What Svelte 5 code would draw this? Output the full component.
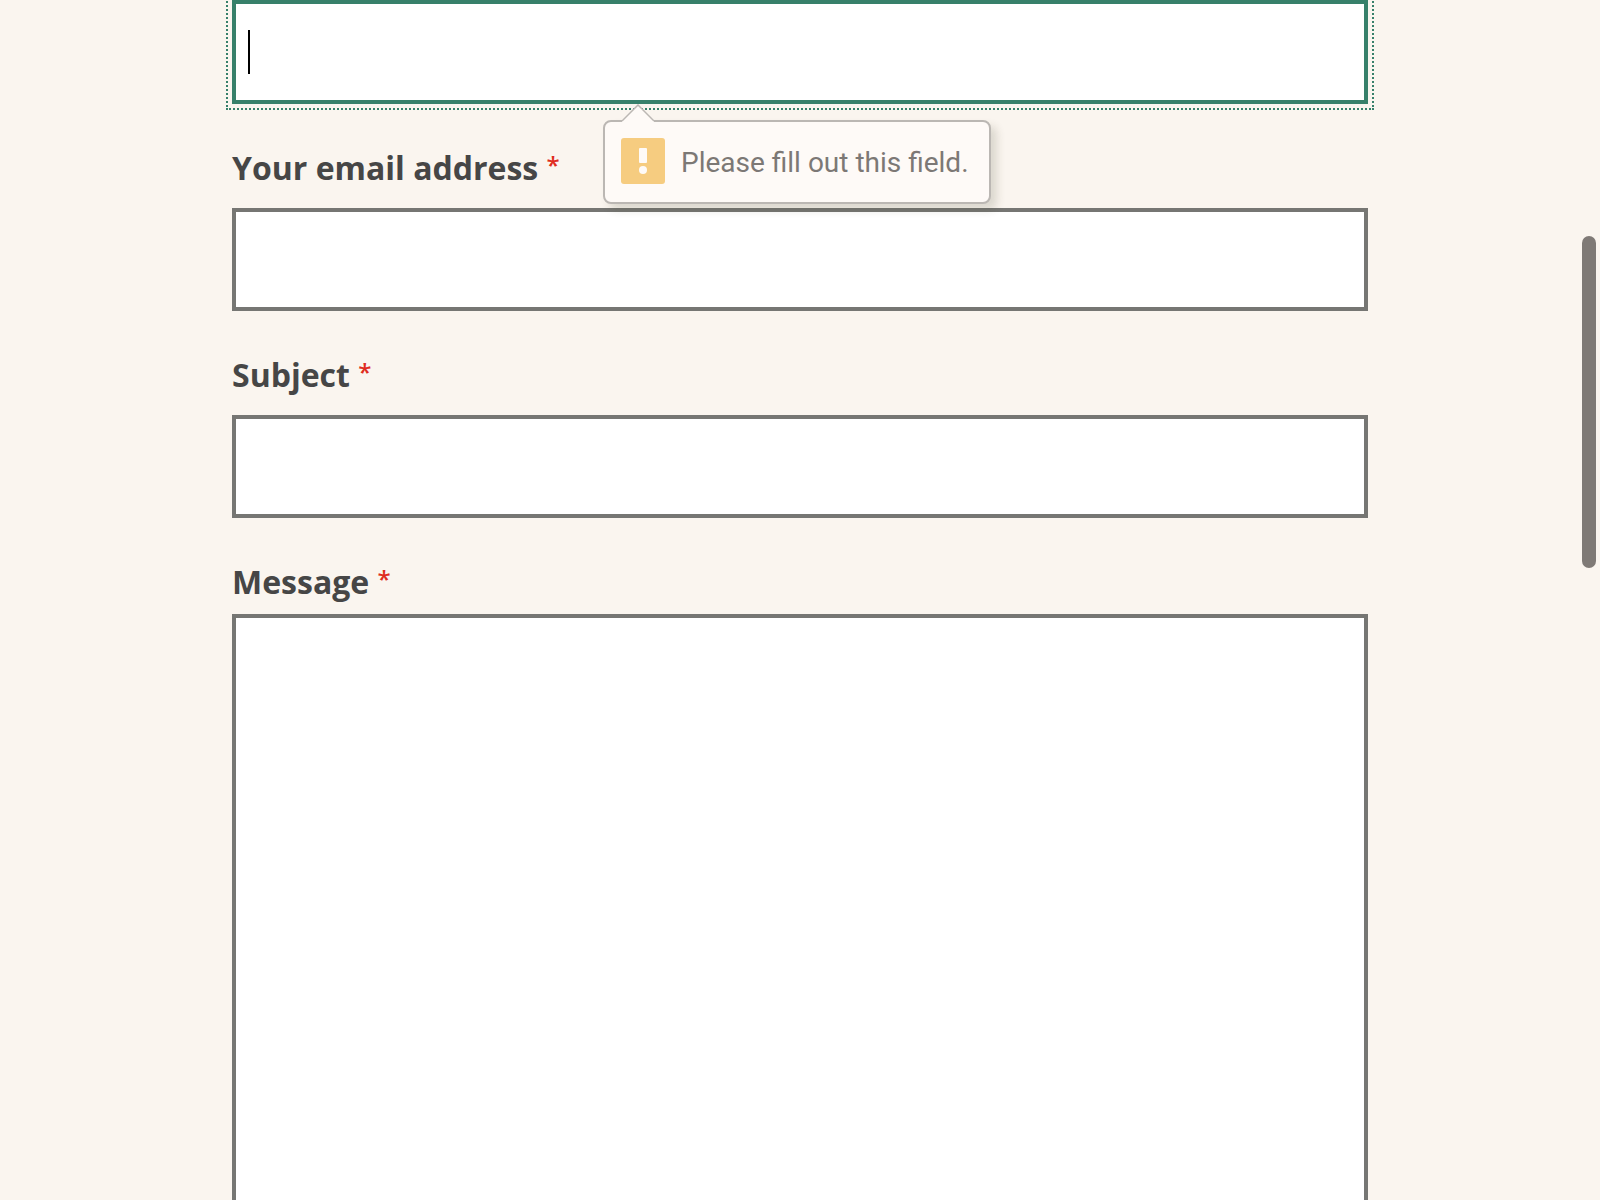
<script>
  let name = $state('');
  let email = $state('');
  let subject = $state('');
  let message = $state('');
</script>

<div class="page">
  <form class="form" novalidate>
    <div class="field">
      <input
        class="box current"
        type="text"
        aria-label="Your name"
        aria-describedby="name-hint"
        required
        bind:value={name}
      />
      <span class="caret" aria-hidden="true"></span>
      <div class="tip" id="name-hint" role="alert">
        <svg class="arrow" viewBox="0 0 32 18" aria-hidden="true">
          <path class="arrow-fill" d="M0 18V16L16 1L32 16V18Z" />
          <path class="arrow-line" d="M0 17L16 1L32 17" />
        </svg>
        <svg class="warning" viewBox="0 0 44 46" aria-hidden="true">
          <rect width="44" height="46" rx="3" fill="#f6cc80" />
          <rect x="18" y="10" width="8" height="15" rx="1" fill="#fefaf7" />
          <circle cx="22" cy="32" r="4" fill="#fefaf7" />
        </svg>
        <span>Please fill out this field.</span>
      </div>
    </div>

    <div class="field">
      <label for="email">Your email address <span class="star">*</span></label>
      <input class="box" id="email" type="email" required bind:value={email} />
    </div>

    <div class="field">
      <label for="subject">Subject <span class="star">*</span></label>
      <input class="box" id="subject" type="text" required bind:value={subject} />
    </div>

    <div class="field message">
      <label for="message">Message <span class="star">*</span></label>
      <textarea class="box" id="message" rows="20" required bind:value={message}></textarea>
    </div>
  </form>
  <div class="scroll-thumb" aria-hidden="true"></div>
</div>

<style>
  :global(body) {
    margin: 0;
    background: #faf5ef;
  }

  .page {
    position: relative;
    height: 100vh;
    overflow: hidden;
    background: #faf5ef;
    color: #464646;
    font-family: 'Open Sans', 'Noto Sans', sans-serif;
  }

  .form {
    box-sizing: border-box;
    max-width: 1168px;
    margin: 0 auto;
    padding: 0 16px;
    display: flex;
    flex-direction: column;
    gap: 40px;
  }

  .field {
    position: relative;
    display: flex;
    flex-direction: column;
    gap: 16px;
  }

  .message {
    gap: 8px;
  }

  label {
    font-size: 32px;
    line-height: 48px;
    font-weight: 700;
  }

  .star {
    color: #df2c20;
    font-size: 24px;
    font-weight: 600;
    line-height: 1;
    vertical-align: 6px;
  }

  .box {
    box-sizing: border-box;
    display: block;
    width: 100%;
    height: 103px;
    margin: 0;
    padding: 12px;
    border: 4px solid #767673;
    border-radius: 0;
    background: #fff;
    color: #222;
    font: inherit;
    font-size: 32px;
    outline: none;
  }

  .current {
    height: 104px;
    border-color: #37806a;
    outline: 2px dotted #37806a;
    outline-offset: 4px;
  }

  textarea.box {
    height: auto;
    resize: none;
  }

  .caret {
    position: absolute;
    left: 16px;
    top: 30px;
    width: 2px;
    height: 44px;
    background: #000;
  }

  .tip {
    position: absolute;
    z-index: 1;
    top: 120px;
    left: 371px;
    display: flex;
    align-items: flex-start;
    gap: 16px;
    padding: 16px 20px 18px 16px;
    border: 2px solid #bbb7b3;
    border-radius: 8px;
    background: #fefaf7;
    box-shadow: 6px 6px 8px rgba(60, 60, 40, 0.16);
    color: #7c7875;
    font-family: Roboto, Inter, sans-serif;
    font-size: 28px;
    line-height: 50px;
    height: 46px;
    white-space: nowrap;
  }

  .arrow {
    position: absolute;
    left: 17px;
    top: -18px;
    width: 32px;
    height: 18px;
  }

  .arrow-fill {
    fill: #fefaf7;
  }

  .arrow-line {
    fill: none;
    stroke: #bbb7b3;
    stroke-width: 1.5;
  }

  .warning {
    width: 44px;
    height: 46px;
  }

  .scroll-thumb {
    position: absolute;
    top: 236px;
    right: 4px;
    width: 14px;
    height: 332px;
    border-radius: 7px;
    background: #7f7a76;
  }
</style>
